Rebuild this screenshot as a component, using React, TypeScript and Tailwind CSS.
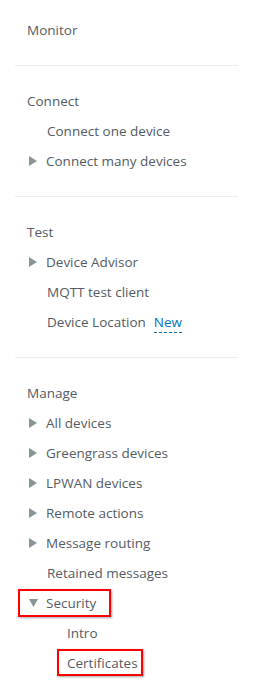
import React from "react";

const Arrow = ({ down = false }: { down?: boolean }) => (
  <svg width="9" height="10" viewBox="0 0 9 10" className="shrink-0">
    {down ? (
      <polygon points="0,1 9,1 4.5,9" fill="#879596" />
    ) : (
      <polygon points="0,0 8,5 0,10" fill="#879596" />
    )}
  </svg>
);

const Header = ({ children }: { children: React.ReactNode }) => (
  <div className="h-[30px] flex items-center pl-[12px]">{children}</div>
);

const Item = ({ children, arrow = false, down = false }: { children: React.ReactNode; arrow?: boolean; down?: boolean }) => (
  <div className={`h-[30px] flex items-center ${arrow ? "pl-[14px]" : "pl-[15px]"}`}>
    <div className="w-[17px] flex items-center">{arrow && <Arrow down={down} />}</div>
    <div>{children}</div>
  </div>
);

const Divider = () => <div className="my-[20px] h-px bg-[#eaeded]" />;

export default function App() {
  return (
    <div
      className="w-[255px] h-[682px] bg-white pt-[15px] pl-[15px] pr-[17px] text-[13.5px] text-[#545b64] overflow-hidden"
      style={{ fontFamily: '"Open Sans", sans-serif' }}
    >
      <Header>Monitor</Header>
      <Divider />
      <Header>Connect</Header>
      <Item>Connect one device</Item>
      <Item arrow>Connect many devices</Item>
      <Divider />
      <Header>Test</Header>
      <Item arrow>Device Advisor</Item>
      <Item>MQTT test client</Item>
      <Item>
        <span>Device Location</span>
        <span className="ml-[8px] text-[#0073bb] border-b border-dashed border-[#0073bb] pb-[1px]">New</span>
      </Item>
      <Divider />
      <Header>Manage</Header>
      <Item arrow>All devices</Item>
      <Item arrow>Greengrass devices</Item>
      <Item arrow>LPWAN devices</Item>
      <Item arrow>Remote actions</Item>
      <Item arrow>Message routing</Item>
      <Item>Retained messages</Item>
      <div className="relative">
        <Item arrow down>Security</Item>
        <div className="absolute left-[3px] top-[1px] w-[93px] h-[28px] border-2 border-[#ff0000] shadow-[1px_1px_2px_rgba(0,0,0,0.35)]" />
      </div>
      <div className="h-[30px] flex items-center pl-[52px]">Intro</div>
      <div className="relative">
        <div className="h-[30px] flex items-center pl-[52px]">Certificates</div>
        <div className="absolute left-[42px] top-[1px] w-[86px] h-[27px] border-2 border-[#ff0000] shadow-[1px_1px_2px_rgba(0,0,0,0.35)]" />
      </div>
    </div>
  );
}
